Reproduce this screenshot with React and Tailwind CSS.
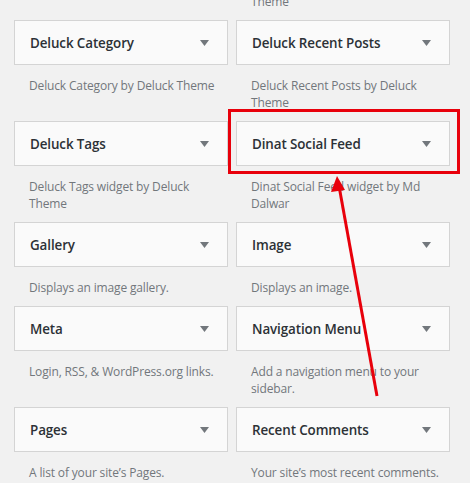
const rows = [
  [
    { title: 'Deluck Category', desc: ['Deluck Category by Deluck Theme'] },
    { title: 'Deluck Recent Posts', desc: ['Deluck Recent Posts by Deluck', 'Theme'] },
  ],
  [
    { title: 'Deluck Tags', desc: ['Deluck Tags widget by Deluck', 'Theme'] },
    { title: 'Dinat Social Feed', desc: ['Dinat Social Feed widget by Md', 'Dalwar'] },
  ],
  [
    { title: 'Gallery', desc: ['Displays an image gallery.'] },
    { title: 'Image', desc: ['Displays an image.'] },
  ],
  [
    { title: 'Meta', desc: ['Login, RSS, & WordPress.org links.'] },
    { title: 'Navigation Menu', desc: ['Add a navigation menu to your', 'sidebar.'] },
  ],
  [
    { title: 'Pages', desc: ["A list of your site\u2019s Pages."] },
    { title: 'Recent Comments', desc: ["Your site\u2019s most recent comments."] },
  ],
]

function Widget({ title, desc }) {
  return (
    <div>
      <div className="h-[45px] border border-[#d4d4d4] bg-[#fafafa] flex items-center justify-between pl-[15px] pr-[18px]">
        <h3 className="text-[13.4px] font-semibold tracking-[-0.1px] text-[#2c3136] mt-px">{title}</h3>
        <svg width="9" height="6" viewBox="0 0 9 6" className="mt-px">
          <polygon points="0,0 9,0 4.5,6" fill="#72777c" />
        </svg>
      </div>
      <div className="mt-[12px] mb-[9px] px-[15px] text-[12px] tracking-[-0.15px] leading-[17.6px] text-[#72777c]">
        {desc.map((l, i) => (
          <div key={i} className="whitespace-nowrap">{l}</div>
        ))}
      </div>
    </div>
  )
}

export default function App() {
  return (
    <div className="relative w-[470px] h-[483px] overflow-hidden bg-[#f1f1f1] font-['Open_Sans',sans-serif]">
      <div className="pl-[14px]">
        {/* tail of the previous row */}
        <div className="grid grid-cols-[214px_214px] gap-x-[8px] -mt-[7px] mb-[9px]">
          <div />
          <div className="px-[15px] text-[12px] tracking-[-0.15px] leading-[17.6px] text-[#72777c]">Theme</div>
        </div>
        {rows.map((r, i) => (
          <div key={i} className="grid grid-cols-[214px_214px] gap-x-[8px]">
            <Widget {...r[0]} />
            <Widget {...r[1]} />
          </div>
        ))}
      </div>

      {/* red annotation */}
      <div className="absolute left-[228px] top-[109px] w-[232px] h-[65px] border-[3px] border-[#e8000b]" />
      <svg className="absolute left-0 top-0" width="470" height="483" viewBox="0 0 470 483">
        <line x1="377" y1="396" x2="339" y2="186" stroke="#e8000b" strokeWidth="3" />
        <polygon points="337,176 331,192 345,190" fill="#e8000b" />
      </svg>
    </div>
  )
}
